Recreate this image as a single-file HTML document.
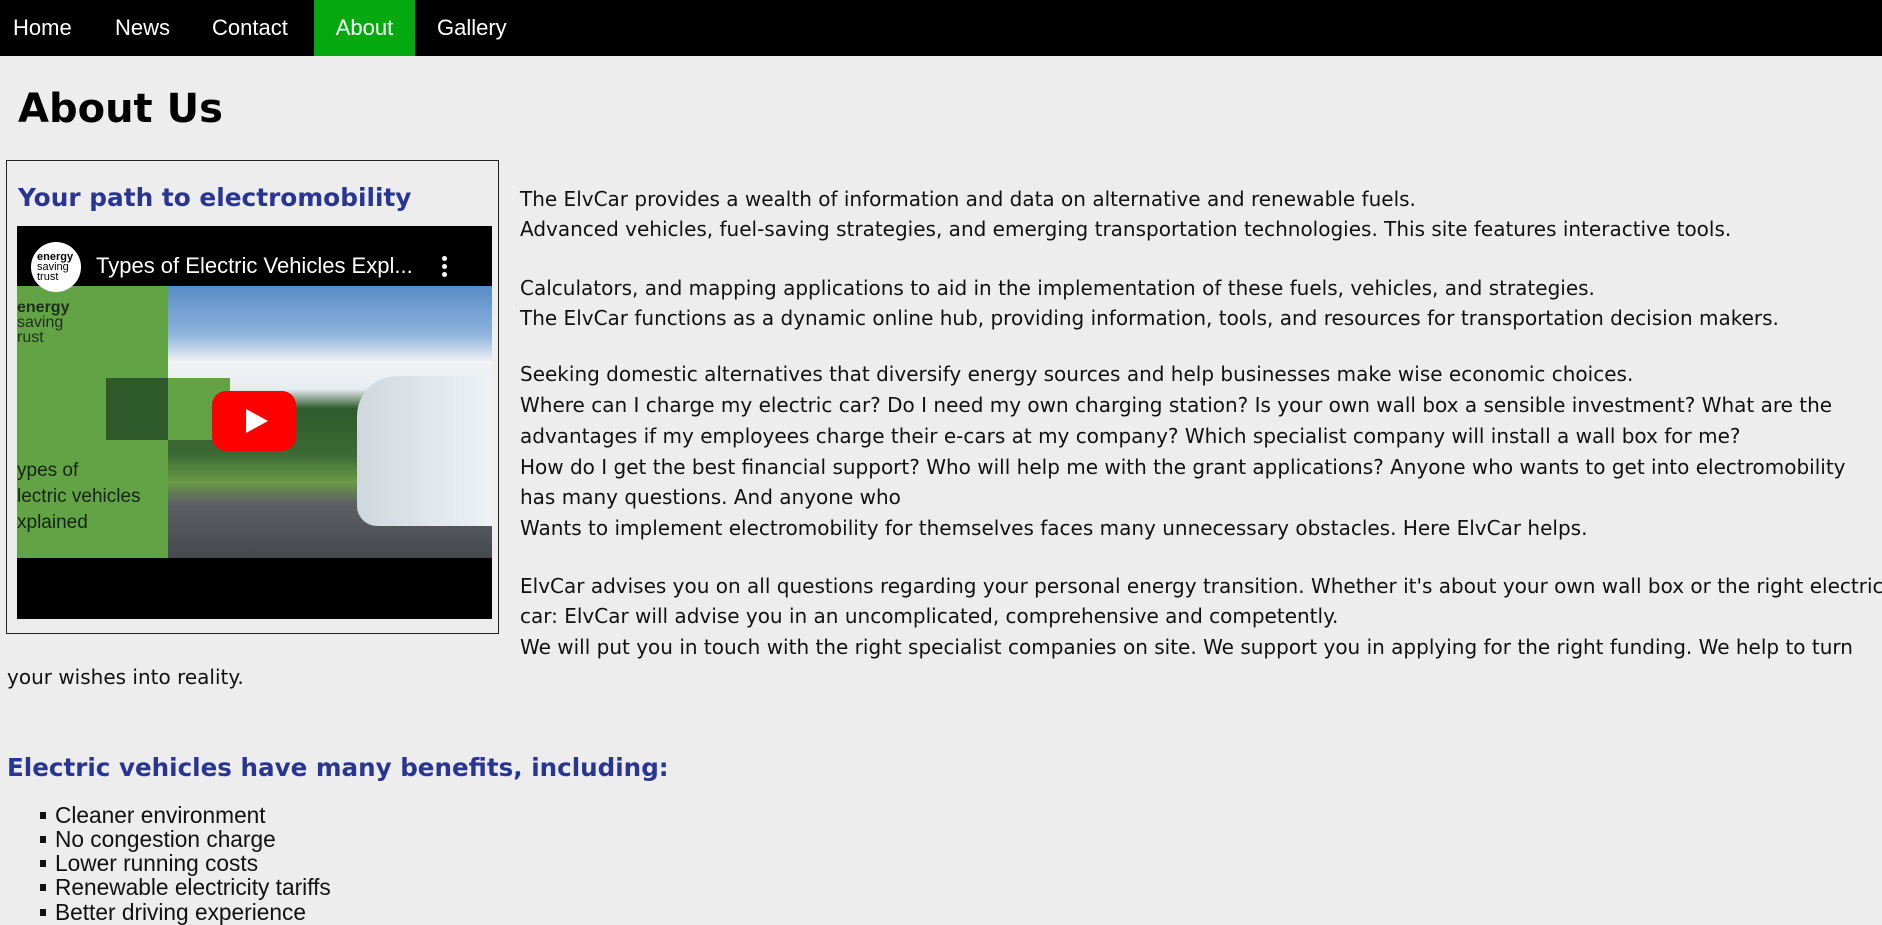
<!DOCTYPE html>
<html><head><meta charset="utf-8"><style>
*{margin:0;padding:0;box-sizing:border-box}
body{width:1882px;height:925px;background:#ededed;position:relative;overflow:hidden;font-family:"DejaVu Sans",Verdana,sans-serif;color:#111}
.nav{position:absolute;left:0;top:0;width:1882px;height:56px;background:#000}
.nav span{position:absolute;top:0;height:56px;line-height:56px;color:#fff;font-family:"Liberation Sans",Arial,sans-serif;font-size:22px}
.act{background:#04a910;left:314px;width:101px;text-align:center}
h1{position:absolute;left:18px;top:84px;font-size:40px;font-weight:bold;line-height:50px;color:#000}
.box{position:absolute;left:6px;top:160px;width:493px;height:474px;border:1px solid #222}
.h3{position:absolute;font-weight:bold;font-size:24.8px;color:#283593;white-space:nowrap;line-height:30px}
.vid{position:absolute;left:17px;top:226px;width:475px;height:393px;background:#000;overflow:hidden}
.l{position:absolute;left:520px;font-size:20px;line-height:30px;white-space:nowrap}
.li{position:absolute;left:55px;font-family:"Liberation Sans",Arial,sans-serif;font-size:22.7px;line-height:24px;white-space:nowrap}
.li:before{content:"";position:absolute;left:-15px;top:9px;width:6px;height:7px;background:#111}
</style></head><body>
<div class="nav">
<span style="left:13px">Home</span>
<span style="left:115px">News</span>
<span style="left:212px">Contact</span>
<span class="act">About</span>
<span style="left:437px">Gallery</span>
</div>
<h1>About Us</h1>
<div class="box"></div>
<div class="h3" style="left:18px;top:183px">Your path to electromobility</div>
<div class="vid">
 <div style="position:absolute;left:0;top:60px;width:475px;height:272px;background:linear-gradient(#5a8cc8 0%,#8fb4dc 18%,#f2f4f6 28%,#e6ecf0 38%,#2f5a2c 45%,#3c6a34 62%,#6a9a46 72%,#5c6064 80%,#45484c 100%)"></div>
 <div style="position:absolute;left:0;top:60px;width:151px;height:272px;background:#62a345"></div>
 <div style="position:absolute;left:89px;top:152px;width:62px;height:62px;background:#2f5a2c"></div>
 <div style="position:absolute;left:151px;top:152px;width:62px;height:62px;background:#62a345"></div>
 <div style="position:absolute;left:340px;top:150px;width:135px;height:150px;background:linear-gradient(90deg,#cfd8de,#eef2f5);border-radius:40px 0 0 20px"></div>
 <div style="position:absolute;left:0;top:74px;font-family:'Liberation Sans',sans-serif;font-weight:bold;font-size:16px;line-height:15px;color:#1f2f1a">energy<br><span style="font-weight:normal">saving<br>rust</span></div>
 <div style="position:absolute;left:0;top:232px;font-family:'Liberation Sans',sans-serif;font-size:19px;line-height:26px;color:#15240f">ypes of<br>lectric vehicles<br>xplained</div>
 <div style="position:absolute;left:195px;top:165px;width:84px;height:60px;background:#f00;border-radius:14px"></div>
 <div style="position:absolute;left:229px;top:183px;width:0;height:0;border-left:22px solid #fff;border-top:12px solid transparent;border-bottom:12px solid transparent"></div>
 <div style="position:absolute;left:14px;top:16px;width:50px;height:50px;border-radius:50%;background:#fff;font-family:'Liberation Sans',sans-serif;font-size:11px;line-height:10px;color:#000;padding:10px 0 0 6px"><b>energy</b><br>saving<br>trust</div>
 <div style="position:absolute;left:79px;top:25px;line-height:30px;color:#fff;font-family:'Liberation Sans',sans-serif;font-size:22px;white-space:nowrap">Types of Electric Vehicles Expl...</div>
 <div style="position:absolute;left:425px;top:30px;width:5px;height:5px;border-radius:50%;background:#fff;box-shadow:0 8px #fff,0 16px #fff"></div>
</div>
<div class="l" style="top:184px">The ElvCar provides a wealth of information and data on alternative and renewable fuels.</div>
<div class="l" style="top:214px">Advanced vehicles, fuel-saving strategies, and emerging transportation technologies. This site features interactive tools.</div>
<div class="l" style="top:273px">Calculators, and mapping applications to aid in the implementation of these fuels, vehicles, and strategies.</div>
<div class="l" style="top:303px">The ElvCar functions as a dynamic online hub, providing information, tools, and resources for transportation decision makers.</div>
<div class="l" style="top:359px">Seeking domestic alternatives that diversify energy sources and help businesses make wise economic choices.</div>
<div class="l" style="top:390px">Where can I charge my electric car? Do I need my own charging station? Is your own wall box a sensible investment? What are the</div>
<div class="l" style="top:421px">advantages if my employees charge their e-cars at my company? Which specialist company will install a wall box for me?</div>
<div class="l" style="top:452px">How do I get the best financial support? Who will help me with the grant applications? Anyone who wants to get into electromobility</div>
<div class="l" style="top:482px">has many questions. And anyone who</div>
<div class="l" style="top:513px">Wants to implement electromobility for themselves faces many unnecessary obstacles. Here ElvCar helps.</div>
<div class="l" style="top:571px">ElvCar advises you on all questions regarding your personal energy transition. Whether it's about your own wall box or the right electric</div>
<div class="l" style="top:601px">car: ElvCar will advise you in an uncomplicated, comprehensive and competently.</div>
<div class="l" style="top:632px">We will put you in touch with the right specialist companies on site. We support you in applying for the right funding. We help to turn</div>
<div class="l" style="top:662px;left:7px">your wishes into reality.</div>
<div class="h3" style="left:7px;top:753px;font-size:24.6px">Electric vehicles have many benefits, including:</div>
<div class="li" style="top:803px">Cleaner environment</div>
<div class="li" style="top:827px">No congestion charge</div>
<div class="li" style="top:851px">Lower running costs</div>
<div class="li" style="top:875px">Renewable electricity tariffs</div>
<div class="li" style="top:900px">Better driving experience</div>
</body></html>
